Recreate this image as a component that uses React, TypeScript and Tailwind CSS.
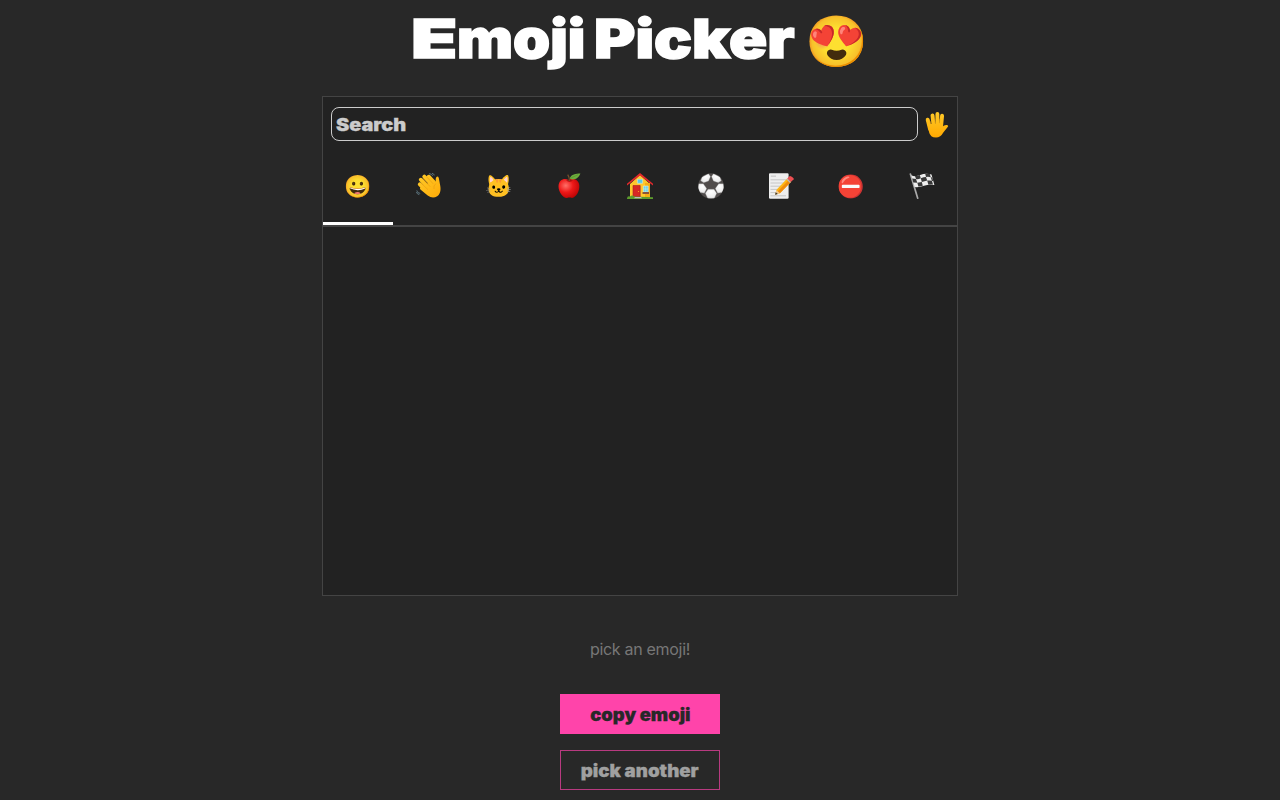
import type { ReactNode } from 'react';

function Icon({ children, label }: { children: ReactNode; label: string }) {
  return <svg viewBox="0 0 26 26" className="mb-0.5 ml-0.5 block size-[26px] shrink-0" role="img" aria-label={label}>{children}</svg>;
}

function Apple() {
  return (
    <Icon label="Food">
      <defs><radialGradient id="apple" cx=".35" cy=".35" r=".7"><stop stopColor="#ff7068" /><stop offset=".5" stopColor="#ee1818" /><stop offset="1" stopColor="#bd0505" /></radialGradient></defs>
      <path d="M11.5 7C8 4.5 1.5 6 1.5 13.5C1.5 19 6 25.2 10 25C12 24.5 13 24.4 15 24.9C19 24.6 22.8 18 22.3 12.5C21.8 6 15.5 5 11.5 7Z" fill="url(#apple)" />
      <path d="M9 7.5Q12 9.8 16 7.4Q12 6.5 9 7.5Z" fill="#a30d0d" />
      <path d="M12.3 8Q12.7 4.5 10.7 1.7" fill="none" stroke="#76502c" strokeWidth="1.3" />
      <path d="M12.7 5.5C14.5 1 18.5.8 23.4.5C21 6.5 16 7.5 12.7 5.5Z" fill="#6ead3c" />
      <path d="M14 5L21 1.7" stroke="#4f8e31" strokeWidth=".6" />
    </Icon>
  );
}

function House() {
  return (
    <Icon label="Places">
      <path d="M3 11L13 2L23 11V25H3Z" fill="#ffc72d" />
      <path d="M18 10H23V25H18Z" fill="#f5ae16" />
      <path d="M0 12.6V10.7L13 0L26 10.7V12.6L13 2.6Z" fill="#e5292c" />
      <path d="M10.4 6.2H15.6V10.3H10.4Z" fill="#58c8e8" stroke="#d9ead5" strokeWidth=".6" />
      <path d="M6 12.5H13.2V24H6Z" fill="#d72824" stroke="#a41d22" strokeWidth=".6" />
      <circle cx="11.5" cy="18.5" r=".6" fill="#ffb229" />
      <path d="M16.3 13H21.2V19H16.3Z" fill="#67d2ef" stroke="#e9f1d8" strokeWidth=".6" />
      <path d="M18.7 13V19M16.3 16H21.2" stroke="#d8f0dc" strokeWidth=".5" />
      <path d="M15.5 19H22V21H15.5Z" fill="#8b5438" />
      <path d="M0 25.5Q.3 22.5 3 23.4Q5 21.4 7.5 23.5L26 24.3V26H0Z" fill="#5d9c2d" />
      <path d="M8 24H14L15 25.2H7Z" fill="#bbb" />
    </Icon>
  );
}

function Flag() {
  return (
    <Icon label="Flags">
      <path d="M1.4 1L8.7 25.2" stroke="#aaa" strokeWidth="1.7" strokeLinecap="round" />
      <path d="M2.2 2.2Q6.2 4.2 11.2 2T22.5 1.4L25.4 12.1Q20 11 15 12.8T5.6 14Z" fill="#eee" />
      <path d="M6 3Q8.6 3 10.8 2.1L11.8 5.2Q9.3 6.5 7 6.1ZM16.2.8Q18.5.4 20.8 1.1L21.8 4.2Q19.3 3.5 17 4ZM3.2 5.4L7 6.1L8.3 9.7L4.3 9.4ZM11.8 5.2Q14.7 4 17 4L18.2 7.6Q15.5 8.2 12.8 9.1ZM8.3 9.7L12.8 9.1L13.8 12.8Q11 13.6 9.4 13.5ZM18.2 7.6Q20.6 7.1 22.9 7.8L24 11.6Q22 11.2 19.4 11.7ZM21.8 4.2L23.3 4.6L24.3 8.2L22.9 7.8Z" fill="#383838" />
    </Icon>
  );
}

function Football() {
  return (
    <Icon label="Activities">
      <defs><radialGradient id="ball" cx=".5" cy=".3" r=".75"><stop stopColor="#fff" /><stop offset=".7" stopColor="#eee" /><stop offset="1" stopColor="#ccc" /></radialGradient><clipPath id="round"><circle cx="13" cy="13" r="12.8" /></clipPath></defs>
      <g clipPath="url(#round)">
        <path d="M0 0H26V26H0Z" fill="#504c4b" />
        <g fill="url(#ball)" stroke="#888" strokeWidth=".3">
          <path d="M4 4L10.5 .7L12.5 3.6L10.6 8L5.7 9.8L2.7 7.8Z" />
          <path d="M22 4L15.5 .7L13.5 3.6L15.4 8L20.3 9.8L23.3 7.8Z" />
          <path d="M.6 10.8L5.3 10.7L8.7 15.5L6.4 20.2L2 19.4L0 15Z" />
          <path d="M25.4 10.8L20.7 10.7L17.3 15.5L19.6 20.2L24 19.4L26 15Z" />
          <path d="M10 16.2H16L18.7 20.3L16.3 25.6H9.7L7.3 20.3Z" />
        </g>
      </g>
    </Icon>
  );
}

function Memo() {
  return (
    <Icon label="Objects">
      <path d="M1 1Q1 .2 2 .2H19.5Q20.6.2 20.6 1.4V24.5Q20.6 25.8 19.4 25.8H2.2Q1 25.8 1 24.5Z" fill="#eee" />
      <path d="M2.8 3.2H8" stroke="#ccc" strokeWidth="1.4" />
      <path d="M2.5 6.8H18M2.5 10H17M2.5 13.2H14M2.5 16.4H11M2.5 19.6H8M2.5 22.8H18" stroke="#bbb" strokeWidth=".8" />
      <path d="M7.3 21.7L8.3 17.1L19.2 5.5L22.9 9L11.9 20.2Z" fill="#ffb612" />
      <path d="M9.6 18.6L21 6.8L22.9 9L11.9 20.2Z" fill="#ef8b0d" />
      <path d="M19.2 5.5L21.5 3.2Q22.7 2.6 24.8 4.6T25.2 6.7L22.9 9Z" fill="#ed4f52" />
      <path d="M18.4 6.3L19.2 5.5L22.9 9L22 9.9Z" fill="#b8bbb9" />
      <path d="M8.3 17.1L11.9 20.2L7.3 21.7Z" fill="#edc790" /><path d="M7.8 19.2L9.8 20.9L7 21.8Z" fill="#333" />
    </Icon>
  );
}

function OpenHand() {
  return (
    <Icon label="Skin tone">
      <defs><linearGradient id="palm" gradientUnits="userSpaceOnUse" x1="0" x2="0" y1="0" y2="26"><stop stopColor="#ffca28" /><stop offset="1" stopColor="#ffa800" /></linearGradient></defs>
      <g stroke="url(#palm)" strokeWidth="3.9" strokeLinecap="round"><path d="M3.7 7.7L6 17M8.5 3.4L9.7 15M13.4 2L13.4 15M18.1 3.7L17 15" /></g>
      <path d="M4.2 14L6 12H18V15Q21 12.4 23 13.1Q25.2 13.8 23.3 15.5L19.5 20.3Q16.5 25.6 12 25.6Q6.2 25.6 5 20Z" fill="url(#palm)" />
      <path d="M6.7 12L6 8.8M11.2 11L10.9 7M15.4 11L15.8 7" stroke="#e29a12" strokeWidth=".6" />
    </Icon>
  );
}

function Wave() {
  return (
    <Icon label="People">
      <defs><linearGradient id="wave" gradientUnits="userSpaceOnUse" x1="3" y1="3" x2="24" y2="24"><stop stopColor="#ffca28" /><stop offset="1" stopColor="#ffab08" /></linearGradient></defs>
      <g stroke="url(#wave)" strokeWidth="3.9" strokeLinecap="round"><path d="M3.8 11.3L13 20M4.8 6.7L15 17M8.3 3.6L18 14M12.7 3.7L20 11.5" /></g>
      <path d="M7 13L18 7L20 10.5Q19.2 6 20.3 4.3Q21.7 2.6 22.8 5L24.2 12.5Q25.6 20 21.2 23.3Q16.5 26.3 11.7 22.5L4.7 16.8Q3 14.8 5.2 14Z" fill="url(#wave)" />
      <path d="M5 10L12 16.7M7 6.2L14.2 13.7M11 4.2L17.2 10.8M20 10.5Q17 12.7 18 16" fill="none" stroke="#e99b12" strokeWidth=".6" />
      <path d="M13 .8Q15.7.4 17 2.9M16 .3Q17.7.5 18.4 2.3M.8 17.4Q1 20.1 4.2 20.4M.3 19.1Q1.4 21.5 3.3 21.6" fill="none" stroke="#607984" strokeWidth=".9" />
    </Icon>
  );
}

const categories: { name: string; icon: ReactNode }[] = [
  { name: 'smileys', icon: '😀' },
  { name: 'people', icon: <Wave /> },
  { name: 'animals', icon: '🐱' },
  { name: 'food', icon: <Apple /> },
  { name: 'places', icon: <House /> },
  { name: 'activities', icon: <Football /> },
  { name: 'objects', icon: <Memo /> },
  { name: 'symbols', icon: '⛔' },
  { name: 'flags', icon: <Flag /> },
];

function Wide({ children, className }: { children: string; className: string }) {
  return <span className={`block whitespace-nowrap font-black ${className}`}>{children}</span>;
}

export default function App() {
  return (
    <main className="flex h-screen flex-col items-center overflow-hidden bg-[#282828] font-['Inter',sans-serif] text-white">
      <h1 className="flex h-24 w-[454px] shrink-0 items-start whitespace-nowrap pt-[3px] text-[54px] font-black leading-[72px] [-webkit-text-stroke:1.5px_white]">
        <span className="-ml-[2px] block w-[46px] shrink-0"><span className="block w-max origin-left scale-x-[1.4]">E</span></span>
        <span className="block w-[137px] shrink-0"><span className="block w-max origin-left scale-x-[1.1]">moji</span></span>
        <span className="block w-[211px] shrink-0"><span className="block w-max origin-left scale-x-[1.168]">Picker</span></span>
        <span className="block pt-[2px] text-[50.5px] font-normal leading-[72px] [-webkit-text-stroke:0]">😍</span>
      </h1>

      <section className="flex h-[500px] w-[636px] shrink-0 flex-col border border-[#444] bg-[#222]">
        <div className="flex h-[54px] items-center gap-1 px-2">
          <div className="flex h-[34px] w-[587px] shrink-0 items-center rounded-lg border border-[#ccc] pl-1 text-[#ccc]">
            <Wide className="origin-left scale-x-[1.17] pt-[3px] text-[17px] [-webkit-text-stroke:0.3px_#ccc]">Search</Wide>
          </div>
          <span className="flex w-[27px] items-center justify-center pt-1">
            <OpenHand />
          </span>
        </div>
        <div className="grid h-[74px] grid-cols-9 pb-[3px]">
          {categories.map(({ name, icon }) => (
            <span key={name} className="flex items-center justify-center pr-px text-[22px]">{icon}</span>
          ))}
        </div>
        <div className="h-[2px] bg-[#444]"><div className="h-[3px] w-[70px] -translate-y-[3px] bg-white" /></div>
      </section>

      <p className="mt-[41px] h-6 shrink-0 text-base leading-6 tracking-[-0.3px] text-[#777]">pick an emoji!</p>

      <button className="mt-[33px] flex h-10 w-40 shrink-0 items-center justify-center bg-[#ff44aa] text-[#282828]">
        <Wide className="scale-x-[1.08] pt-[3px] text-[17px] [-webkit-text-stroke:0.3px_#282828]">copy emoji</Wide>
      </button>
      <button className="mt-4 flex h-10 w-40 shrink-0 items-center justify-center border border-[#b83a80] text-[#a0a0a0]">
        <Wide className="scale-x-[1.1] pt-[3px] text-[17px] [-webkit-text-stroke:0.3px_#a0a0a0]">pick another</Wide>
      </button>
    </main>
  );
}
